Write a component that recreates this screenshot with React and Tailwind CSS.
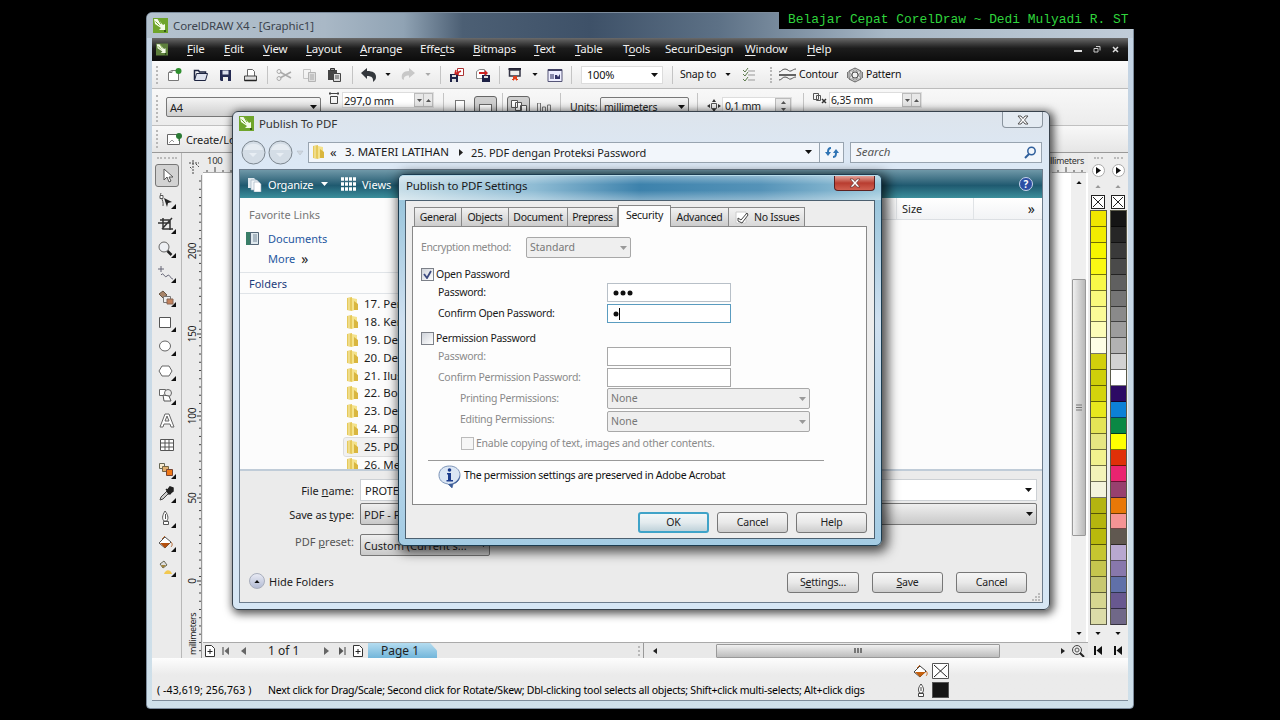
import clsx from 'clsx';

const menus = [
  ['w-[37px]', '', 'F', 'ile'],
  ['w-[39px]', '', 'E', 'dit'],
  ['w-[43px]', '', 'V', 'iew'],
  ['w-[54px]', '', 'L', 'ayout'],
  ['w-[60px]', '', 'A', 'rrange'],
  ['w-[53px]', 'Effe', 'c', 'ts'],
  ['w-[61px]', '', 'B', 'itmaps'],
  ['w-[41px]', '', 'T', 'ext'],
  ['w-[48px]', '', 'T', 'able'],
  ['w-[42px]', 'T', 'o', 'ols'],
  ['w-[80px]', 'SecuriDesign', '', ''],
  ['w-[62px]', '', 'W', 'indow'],
  ['w-[40px]', '', 'H', 'elp'],
];

const yellows = [
  '#f0e600', '#f2ec00', '#f6f600', '#faf814', '#f8f848', '#f9f97c', '#fbfb98', '#fdfdb8', '#fefee6',
  '#d2cf0c', '#cfcf0a', '#d4d40c', '#e8e81e', '#e4e456', '#e6e682', '#f1f18e', '#f3f3b8', '#f4f4dc',
  '#b4b410', '#b5b50e', '#b9b90c', '#c6c630', '#c6c64e', '#c8c870', '#d6d690', '#dcdca8',
];

const mixed = [
  '#151515', '#262626', '#3a3a3a', '#4a4a4a', '#606060', '#757575', '#8a8a8a', '#9d9d9d', '#b2b2b2',
  '#d2d2d2', '#ffffff', '#2c0a64', '#0c80d6', '#0a8844', '#ffff00', '#e03008', '#ea2470', '#98406e',
  '#e87808', '#f49494', '#605850', '#b8a8d0', '#8878ac', '#6070a8', '#685890', '#706888',
];

const folders = ['17. Pen', '18. Ker', '19. Des', '20. Des', '21. Ilus', '22. Boo', '23. Des', '24. PDF', '25. PDF', '26. Men'];

const tabs = [
  ['General', 'w-[48px]'],
  ['Objects', 'w-[48px]'],
  ['Document', 'w-[60px]'],
  ['Prepress', 'w-[51px]'],
  ['Security', 'w-[53px]'],
  ['Advanced', 'w-[59px]'],
];

function Svg({ w = 16, h = 16, className, children }) {
  return (
    <svg width={w} height={h} viewBox={`0 0 ${w} ${h}`} fill="none" className={clsx('shrink-0', className)}>
      {children}
    </svg>
  );
}

function Caret({ color = '#111', up, className }) {
  return (
    <Svg w={7} h={4} className={className}>
      <path d={up ? 'M0 4h7L3.5 0z' : 'M0 0h7L3.5 4z'} fill={color} />
    </Svg>
  );
}

function Sep() {
  return <div className="h-[18px] w-px shrink-0 bg-[#c4c4c4]"></div>;
}

function Dots({ className }) {
  return <div className={clsx('w-0 shrink-0 border-l-2 border-dotted border-[#b8b8b8]', className)}></div>;
}

function CorelLogo({ small }) {
  return (
    <svg width={small ? 12 : 15} height={small ? 13 : 15} viewBox="0 0 15 15" fill="none" className="shrink-0">
      <rect width="15" height="15" fill={small ? '#5d7f3c' : '#6fa52c'} />
      <path d="M1 1h4l5 6 2-1v6H6l2-2L2 6z" fill="#f4fbe8" />
      <path d="M5 1l3 5M2.500 3.500l4 4" stroke="#6fa52c" strokeWidth="1" />
      <circle cx="12" cy="13" r="1" fill="#204010" />
    </svg>
  );
}

function Slot({ w, className, children }) {
  return <div className={clsx('flex shrink-0 items-center', w, className)}>{children}</div>;
}

/* ---------- main window ---------- */

function MenuBar() {
  return (
    <div className="flex h-[23px] shrink-0 items-center bg-gradient-to-b from-[#6a6a6a] via-[#1c1c1c] via-45% to-[#0c0c0c] pb-[1px] text-[11.500px] tracking-[-0.200px] text-[#f0f0f0]">
      <Slot w="w-[35px]" className="pl-[4px]"><CorelLogo small /></Slot>
      {menus.map(([w, pre, key, post]) => (
        <span key={pre + key + post} className={clsx('shrink-0', w)}>
          {pre}<span className="underline underline-offset-2">{key}</span>{post}
        </span>
      ))}
      <div className="ml-auto flex items-center gap-[11px] pr-[9px]">
        <Svg w={8} h={8}><path d="M0 6h8" stroke="#ddd" strokeWidth="2" /></Svg>
        <Svg w={8} h={8}><path d="M1 3.500h4v3.500H1zM3 1.500h4v4" stroke="#ccc" /></Svg>
        <Svg w={7} h={7}><path d="M1 1l5 5M6 1L1 6" stroke="#ddd" strokeWidth="1.500" /></Svg>
      </div>
    </div>
  );
}

function StandardBar() {
  return (
    <div className="flex h-[28px] shrink-0 items-center border-b border-[#bcbcbc] bg-gradient-to-b from-[#fbfbfb] to-[#e9e9e9] text-[10.500px] tracking-[-0.200px] text-[#111]">
      <Slot w="w-[15px]" className="pl-[4px]"><Dots className="h-[18px]" /></Slot>
      <Slot w="w-[26px]">
        <Svg><path d="M1.500 5.500l3-2h7v10h-10z" fill="#fff" stroke="#777" /><path d="M2 5.500h3v-2" stroke="#777" /><circle cx="11.500" cy="4" r="3" fill="#2f8f2f" /></Svg>
      </Slot>
      <Slot w="w-[26px]">
        <Svg><path d="M1.500 13V3.500h4l1 1.500h6v2" stroke="#1d2440" strokeWidth="1.500" /><path d="M1.500 13.500l2-7h11l-2 7z" fill="#dfe3ee" stroke="#1d2440" /></Svg>
      </Slot>
      <Slot w="w-[24px]">
        <Svg w={14}><path d="M1 3h11v11H2l-1-1z" fill="#242a52" /><path d="M3.500 3.500h6v4h-6z" fill="#dce0ee" /><path d="M4 10h5v4H4z" fill="#eee" /></Svg>
      </Slot>
      <Slot w="w-[24px]">
        <Svg><path d="M4.500 9V2.500h5l2 2V9" fill="#fff" stroke="#666" /><path d="M1.500 9h12v4.500h-12z" fill="#ddd" stroke="#444" /><path d="M1.500 13.500h12" stroke="#222" strokeWidth="1.500" /></Svg>
      </Slot>
      <Slot w="w-[9px]"><Sep /></Slot>
      <Slot w="w-[26px]">
        <Svg><path d="M4 5l11 6M4 11l11-6" stroke="#aaa" strokeWidth="1.500" /><circle cx="3" cy="4.500" r="2" stroke="#aaa" /><circle cx="3" cy="11.500" r="2" stroke="#aaa" /></Svg>
      </Slot>
      <Slot w="w-[25px]">
        <Svg><path d="M1.500 2.500h7v9h-7z" stroke="#c4c4c4" /><path d="M6.500 5.500h7v9h-7z" fill="#ddd" stroke="#b4b4b4" /><path d="M8 8h4M8 10h4M8 12h4" stroke="#aaa" /></Svg>
      </Slot>
      <Slot w="w-[25px]">
        <Svg><path d="M1 3h9v10H1z" fill="#444" /><path d="M3.500 1.500h4v2h-4z" fill="#999" stroke="#333" /><path d="M6.500 6.500h7v8h-7z" fill="#ddd" stroke="#444" /><path d="M8 9h4M8 11h4" stroke="#555" /></Svg>
      </Slot>
      <Slot w="w-[9px]"><Sep /></Slot>
      <Slot w="w-[24px]">
        <Svg><path d="M0 6l6-5v3c6 0 9 2 9 6 0 2-1 3.500-3 5 .5-4-1-6-6-6v3z" fill="#33373c" /></Svg>
      </Slot>
      <Slot w="w-[15px]"><Caret className="h-[3px] w-[6px]" /></Slot>
      <Slot w="w-[25px]">
        <Svg><path d="M15 6L9 1v3C3 4 1 7 2 12l2 1c-.5-3 1-4.500 5-4.500V11z" fill="#c8c8c8" /></Svg>
      </Slot>
      <Slot w="w-[15px]"><Caret color="#aaa" className="h-[3px] w-[6px]" /></Slot>
      <Slot w="w-[9px]"><Sep /></Slot>
      <Slot w="w-[26px]">
        <Svg><path d="M8.500 1.500h6v7h-6z" fill="#fff" stroke="#a33" /><path d="M1 7h8v8H1z" fill="#1d2145" /><path d="M3 8h4v2H3zM3 12h4v3H3z" fill="#ddd" /><path d="M12 4L6 7M6 7l1-4M6 7h4" stroke="#c22" strokeWidth="1.500" /></Svg>
      </Slot>
      <Slot w="w-[24px]">
        <Svg><path d="M1.500 4.500l3-2h5v9h-8z" fill="#fff" stroke="#888" /><path d="M7 8h8v7H7z" fill="#1d2145" /><path d="M9 9h4v2H9z" fill="#ddd" /><path d="M4 5h6v-2l3 3-3 3v-2H4z" fill="#c22" /></Svg>
      </Slot>
      <Slot w="w-[9px]"><Sep /></Slot>
      <Slot w="w-[24px]">
        <Svg w={14}><path d="M.5 1h12.500v2H.5z" fill="#223" /><path d="M1.500 3h10.500v6h-10.500z" fill="#eee" stroke="#334" strokeWidth="1.500" /><path d="M5 9h4v5l-2-2-2 2z" fill="#e0401c" /><path d="M4 13l3-3 3 3" stroke="#e0401c" /></Svg>
      </Slot>
      <Slot w="w-[15px]"><Caret className="h-[3px] w-[6px]" /></Slot>
      <Slot w="w-[24px]">
        <Svg><path d="M1 2.500h14v12H1z" fill="#eef" stroke="#557" /><path d="M1 2h14v2H1z" fill="#446" /><path d="M3 7h4v5H3z" fill="#88a" /><path d="M8 12V8h2l1 2 2-3v5z" fill="#336" /></Svg>
      </Slot>
      <Slot w="w-[10px]"><Sep /></Slot>
      <Slot w="w-[91px]">
        <div className="flex h-[18px] w-[82px] items-center justify-between border border-[#dcdcdc] bg-white pr-1 pl-[5px] text-[11px]">
          100%<Caret />
        </div>
      </Slot>
      <Slot w="w-[8px]"><Sep /></Slot>
      <Slot w="w-[45px]"><span>Snap to</span></Slot>
      <Slot w="w-[17px]"><Caret className="h-[3px] w-[6px]" /></Slot>
      <Slot w="w-[28px]">
        <Svg w={14}><path d="M1 3l2 2 3-4M1 7l2 2 3-4M1 12l2 2 3-4" stroke="#5c7a4c" /><path d="M6 4h7M6 8h7M6 13h7" stroke="#999" /></Svg>
      </Slot>
      <Slot w="w-[9px]"><Dots className="h-[16px]" /></Slot>
      <Slot w="w-[20px]">
        <Svg w={17}><path d="M0 8h17" stroke="#333" strokeWidth="1.500" /><path d="M0 5c2 0 3-3 6-3s4 3 6 2 3-2 5-2M0 13c3 0 3-3 6-3s4 3 6 2 3-2 5-2" stroke="#555" /></Svg>
      </Slot>
      <Slot w="w-[48px]"><span>Contour</span></Slot>
      <Slot w="w-[19px]">
        <Svg><path d="M8 1l6 3v8l-6 3-6-3V4z" stroke="#666" /><path d="M8 1l6 11H2zM8 15L2 4h12z" stroke="#777" strokeWidth=".7" /><circle cx="8" cy="8" r="3" stroke="#555" /><path d="M.5 5v6M15.500 5v6" stroke="#777" /></Svg>
      </Slot>
      <span>Pattern</span>
    </div>
  );
}

function SpinPair() {
  return (
    <div className="flex h-[14px] w-[19px] border border-[#bbb] bg-[#e8e8e8]">
      <div className="flex flex-1 items-center justify-center border-r border-[#bbb]"><Caret color="#555" className="h-[3px] w-[5px]" /></div>
      <div className="flex flex-1 items-center justify-center"><Caret up color="#555" className="h-[3px] w-[5px]" /></div>
    </div>
  );
}

function PropertyBar() {
  return (
    <div className="flex h-[37px] shrink-0 items-start border-b border-[#c0c0c0] bg-gradient-to-b from-[#f8f8f8] to-[#ececec] text-[10.500px] tracking-[-0.200px] text-[#222]">
      <Slot w="w-[14px]" className="pt-[6px] pl-[4px]"><Dots className="h-[27px]" /></Slot>
      <div className="mt-[8px] flex h-[20px] w-[155px] shrink-0 items-center justify-between rounded-[2px] border border-[#777] bg-gradient-to-b from-[#f4f4f4] to-[#cfcfcf] px-[3px] text-[11px]">
        A4<Caret />
      </div>
      <Slot w="w-[21px]" className="pt-[3px] pl-[8px]">
        <Svg w={10} h={13}><path d="M1.500 4.500h7v7h-7z" stroke="#444" /><path d="M0 1.500h10M1 0v3M9 0v3" stroke="#444" /></Svg>
      </Slot>
      <div className="mt-[3px] flex h-[16px] w-[92px] shrink-0 items-center justify-between border border-[#ddd] bg-white pl-[1px] text-[11px]">
        297,0 mm<SpinPair />
      </div>
      <Slot w="w-[21px]" className="pt-[4px] pl-[9px]"><Sep /></Slot>
      <div className="mt-[11px] h-[14px] w-[10px] shrink-0 border border-[#777] bg-white"></div>
      <div className="mt-[7px] ml-[9px] flex h-[22px] w-[23px] shrink-0 justify-center rounded-[3px] border border-[#666] bg-[#cfcfcf] pt-[7px]">
        <div className="h-[10px] w-[13px] border border-[#666] bg-white"></div>
      </div>
      <Slot w="w-[10px]" className="pt-[4px] pl-[5px]"><Sep /></Slot>
      <div className="mt-[7px] flex h-[22px] w-[23px] shrink-0 justify-center rounded-[3px] border border-[#666] bg-[#cfcfcf] pt-[2px]">
        <Svg w={18} h={14}><path d="M1.500 1.500h6v7h-6zM5.500 3.500h6v8h-6zM10.500 6.500h6v7h-6z" fill="#fff" stroke="#555" /></Svg>
      </div>
      <Slot w="w-[30px]" className="pt-[14px] pl-[7px]">
        <Svg w={15} h={10}><path d="M.5 0h3v9h-3zM5.500 4h3v5h-3zM10.500 2h3v7h-3z" stroke="#777" /></Svg>
      </Slot>
      <Slot w="w-[10px]" className="pt-[4px]"><Sep /></Slot>
      <span className="mt-[13px] w-[30px] shrink-0">Units:</span>
      <div className="mt-[8px] flex h-[20px] w-[89px] shrink-0 items-center justify-between rounded-[2px] border border-[#777] bg-gradient-to-b from-[#f4f4f4] to-[#d4d4d4] px-[3px]">
        millimeters<Caret />
      </div>
      <Slot w="w-[18px]" className="pt-[4px] pl-[8px]"><Sep /></Slot>
      <Slot w="w-[15px]" className="pt-[10px]">
        <Svg w={14} h={13}><path d="M4.500 4.500h5v5h-5z" stroke="#555" /><path d="M0 7l3-2v4zM14 7l-3-2v4zM7 0L5 3h4zM7 13l2-3H5z" fill="#333" /></Svg>
      </Slot>
      <div className="mt-[8px] flex h-[18px] w-[70px] shrink-0 items-center justify-between border border-[#ddd] bg-white pl-[2px]">
        0,1 mm
        <div className="flex h-[17px] w-[16px] flex-col items-center justify-around border border-[#bbb] bg-[#e8e8e8]">
          <Caret up color="#555" className="h-[3px] w-[5px]" />
          <Caret color="#555" className="h-[3px] w-[5px]" />
        </div>
      </div>
      <Slot w="w-[21px]" className="pt-[4px] pl-[11px]"><Sep /></Slot>
      <Slot w="w-[16px]" className="pt-[3px]">
        <Svg w={14} h={13}><path d="M.5 1.500h5v6h-5zM3.500 3.500h4v5h-4z" stroke="#555" /><path d="M9 7l4 4M13 7l-4 4" stroke="#333" strokeWidth="1.500" /></Svg>
      </Slot>
      <div className="mt-[3px] flex h-[16px] w-[93px] shrink-0 items-center justify-between border border-[#ddd] bg-white pl-[1px]">
        6,35 mm<SpinPair />
      </div>
    </div>
  );
}

const tools = [
  <path d="M6 2v11l3-3 2 5 2-1-2-4h4z" fill="#fff" stroke="#555" key="pick" />,
  <g key="shape"><path d="M3 1c-2 4 3 6 2 13" stroke="#555" /><path d="M2 3.500h3v3H2z" fill="#fff" stroke="#555" /><path d="M6 6l8 4-4 1-1 4z" fill="#222" /></g>,
  <path d="M0 6h12M5 1v11h10M2 3h10v10M14 1L4 12" stroke="#333" strokeWidth="1.500" key="crop" />,
  <g key="zoom"><circle cx="6" cy="6" r="5" fill="#eef0f4" stroke="#666" /><path d="M9.500 10l4 4" stroke="#222" strokeWidth="2.500" /></g>,
  <path d="M3 0v6M0 3h6M3 9c3-4 3 4 6 1s3 3 6 3" stroke="#667" key="free" />,
  <g key="smart"><path d="M1 4l4-3 4 4-4 3z" fill="#a88468" stroke="#654" /><path d="M5.500 6.500h7v6h-7z" fill="#eee" stroke="#777" /><path d="M9 9h6v5H9z" fill="#c4825c" stroke="#865" /></g>,
  <path d="M1.500 2.500h11v10h-11z" fill="#fff" stroke="#555" key="rect" />,
  <ellipse cx="7" cy="7" rx="5.500" ry="5" fill="#fff" stroke="#666" key="ell" />,
  <path d="M4 2h7l3 5-3 5H4L1 7z" fill="#fff" stroke="#666" key="poly" />,
  <g key="basic"><path d="M1.500 1.500h6v6h-6z" fill="#fff" stroke="#666" /><circle cx="10" cy="5" r="3.500" fill="#eee" stroke="#666" /><path d="M5 7l6 1 2 5H6z" fill="#fff" stroke="#555" /></g>,
  <path d="M2 14L7 1h4l5 13h-3l-1-3H6l-1 3zM7 8h4L9 3z" fill="#fff" stroke="#666" key="text" />,
  <path d="M2.500 2.500h13v11h-13zM2.500 6h13M2.500 10h13M7 2.500v11M11 2.500v11" fill="#fff" stroke="#555" key="table" />,
  <g key="blend"><path d="M1.500 1.500h5v5h-5z" fill="#f6ead0" stroke="#665" /><path d="M4.500 4.500h6v5h-6z" fill="#e0b070" stroke="#764" /><path d="M8.500 7.500h6v6h-6z" fill="#f07818" stroke="#743" /></g>,
  <g key="drop"><path d="M2 14l1-3 6-6 2 2-6 6z" fill="#ccc" stroke="#444" /><path d="M8 3l5 5M9 5l3-4 3 1v3l-4 3z" fill="#222" stroke="#222" strokeWidth="1.500" /></g>,
  <path d="M7 0c4 5 3 8 2 10H6C4 8 4 5 7 0zM5.500 10.500h5v3h-5zM7.500 3v5" fill="#fff" stroke="#555" key="pen" />,
  <g key="fill"><path d="M1 8l6-6 6 5-6 6z" fill="#fff" stroke="#555" /><path d="M2 8h10l-5 5z" fill="#b4500e" /><path d="M4 4L7 1M13 7c2 2 1 4 0 5" stroke="#b4642a" /></g>,
  <g key="ifill"><path d="M2 4l4-3 3 4-4 3z" fill="#ddd" stroke="#665" /><path d="M3 5h5l-3 3z" fill="#a0843c" /><path d="M6 14c2-6 7-4 8 0z" fill="#f2c850" /></g>,
];

function Toolbox() {
  return (
    <div className="flex w-[30px] shrink-0 flex-col items-center border-r border-[#b8b8b8] bg-[#ebebeb] pt-[4px]">
      <div className="mb-[5px] w-[20px] border-t-2 border-dotted border-[#bbb]"></div>
      {tools.map((t, i) => (
        <div
          key={i}
          className={clsx('flex w-[24px] items-center justify-center', i === 0 ? 'mb-[1.500px] h-[23px] rounded-[3px] border border-[#777] bg-[#d2d2d2]' : 'h-[24.500px]')}
        >
          <Svg w={18} h={17}>
            {t}
            {i > 0 && ![10, 11].includes(i) && <path d="M18 12v5h-5z" fill="#111" />}
          </Svg>
        </div>
      ))}
    </div>
  );
}

function VerticalRuler() {
  const ticks = Array.from({ length: 58 }, (_, i) => 6 + i * 8.24);
  return (
    <div className="flex w-[21px] shrink-0 flex-col bg-[#ebebeb] pt-[6px]">
      <Svg w={20} h={16} className="ml-[1px]"><path d="M6 4h10M10 1v14M7 8l2 2M13 5l3 3" stroke="#444" strokeDasharray="2 1" /></Svg>
      <Svg w={20} h={483}>
        <path d="M19.500 0v483" stroke="#999" />
        {ticks.map((y) => <path key={y} d={`M17 ${y}h2`} stroke="#444" />)}
        {[76, 159, 241, 323, 406].map((y) => <path key={y} d={`M15 ${y}h4`} stroke="#333" />)}
        {[['200', 76], ['150', 159], ['100', 241], ['50', 323], ['0', 406]].map(([t, y]) => (
          <text key={t} transform={`translate(14 ${y}) rotate(-90)`} textAnchor="middle" fontSize="10" letterSpacing="-0.3" fill="#222">{t}</text>
        ))}
        <text transform="translate(14 459) rotate(-90)" textAnchor="middle" fontSize="9" letterSpacing="-0.5" fill="#222">millimeters</text>
      </Svg>
    </div>
  );
}

function HorizontalRuler() {
  return (
    <div className="flex h-[20px] shrink-0 items-stretch justify-between bg-[#ebebeb] text-[10px] text-[#333]">
      <div className="flex flex-col">
        <span className="ml-[4px] h-[14px] text-[9.500px] leading-[16px] tracking-[-0.300px]">100</span>
        <Svg w={30} h={6}><path d="M4 3v2M12 0v5M20 3v2M28 3v2" stroke="#444" /><path d="M0 5.500h30" stroke="#aaa" /></Svg>
      </div>
      <div className="flex flex-col items-end">
        <span className="h-[14px] pr-[4px] text-[9px] leading-[16px] tracking-[-0.300px]">millimeters</span>
        <Svg w={36} h={6}><path d="M6 3v2M14 0v5M22 3v2M30 3v2" stroke="#444" /><path d="M0 5.500h34" stroke="#aaa" /></Svg>
      </div>
    </div>
  );
}

function Palette({ colors, className }) {
  return (
    <div className={clsx('flex shrink-0 flex-col items-center bg-[#ededed]', className)}>
      <div className="mt-[4px] w-[9px] border-t-2 border-dotted border-[#bbb]"></div>
      <div className="mt-[5px] flex size-[13px] items-center justify-center rounded-full border border-[#aaa] bg-white">
        <Svg w={6} h={7}><path d="M1 0v7l5-3.500z" fill="#111" /></Svg>
      </div>
      <Caret up color="#999" className="mt-[8px] h-[3px] w-[6px]" />
      <div className="mt-[7px] flex size-[14px] items-center justify-center border border-[#222] bg-white">
        <Svg w={12} h={12}><path d="M1 1l10 10M11 1L1 11" stroke="#222" /></Svg>
      </div>
      <div className="mt-[1px] flex h-[415px] w-[17px] flex-col border-x border-t border-[#5a5a4a]">
        {colors.map((c, i) => (
          <div key={i} className="flex-1 border-b border-[#00000088]" style={{ backgroundColor: c }}></div>
        ))}
      </div>
      <Caret className="mt-[7px] h-[3px] w-[6px]" />
      <Svg w={8} h={9} className="mt-[11px]"><path d="M1 0v9" stroke="#111" strokeWidth="2" /><path d="M8 0v9L2.500 4.500z" fill="#111" /></Svg>
    </div>
  );
}

function AddPage() {
  return <Svg w={10} h={12}><path d="M.5.500h6l3 3v8h-9z" fill="#fff" stroke="#333" /><path d="M5 4v5M2.500 6.500h5" stroke="#222" /></Svg>;
}

function PageBar() {
  return (
    <div className="flex h-[16px] shrink-0 items-center border-t border-[#aaa] bg-[#e9e9e9] text-[12px] text-[#222]">
      <Slot w="w-[19px]" className="pl-[2px]"><AddPage /></Slot>
      <Slot w="w-[18px]"><Svg w={8} h={8}><path d="M1 0v8" stroke="#777" strokeWidth="1.500" /><path d="M7 0v8L2.500 4z" fill="#666" /></Svg></Slot>
      <Slot w="w-[28px]"><Svg w={6} h={8}><path d="M6 0v8L1 4z" fill="#666" /></Svg></Slot>
      <Slot w="w-[56px]"><span className="text-[12px]">1 of 1</span></Slot>
      <Slot w="w-[14px]"><Svg w={6} h={8}><path d="M0 0v8l5-4z" fill="#666" /></Svg></Slot>
      <Slot w="w-[15px]"><Svg w={8} h={8}><path d="M1 0v8l4.500-4z" fill="#555" /><path d="M7 0v8" stroke="#777" strokeWidth="1.500" /></Svg></Slot>
      <Slot w="w-[15px]"><AddPage /></Slot>
      <div className="flex h-full w-[69px] shrink-0 items-center bg-gradient-to-b from-[#b4dcf0] to-[#72b6da] pl-[13px] text-[12px] [clip-path:polygon(0_0,90%_0,100%_50%,100%_100%,0_100%)]">
        Page 1
      </div>
      <Dots className="ml-auto h-[10px]" />
      <div className="mx-[3px] h-full w-px bg-[#999]"></div>
      <Slot w="w-[69px]" className="pl-[6px]"><Svg w={4} h={6}><path d="M4 0v6L0 3z" fill="#222" /></Svg></Slot>
      <div className="flex h-[14px] w-[284px] shrink-0 items-center justify-center gap-px rounded-[1px] border border-[#999] bg-gradient-to-b from-[#f0f0f0] to-[#bdbdbd]">
        <div className="h-[5px] w-[2px] bg-[#777]"></div>
        <div className="h-[5px] w-[2px] bg-[#777]"></div>
        <div className="h-[5px] w-[2px] bg-[#777]"></div>
      </div>
      <Slot w="w-[71px]" className="justify-end pr-[6px]"><Svg w={4} h={6}><path d="M0 0v6l4-3z" fill="#222" /></Svg></Slot>
      <Slot w="w-[17px]"><Svg w={14} h={13}><circle cx="6" cy="6" r="4.500" stroke="#444" /><circle cx="6" cy="6" r="2" stroke="#555" /><path d="M9 9l4 4" stroke="#222" strokeWidth="2" /></Svg></Slot>
    </div>
  );
}

function StatusBar() {
  return (
    <div className="flex h-[42px] shrink-0 justify-between bg-gradient-to-b from-[#fdfdfd] to-[#ebebeb] to-40% text-[10.500px] text-black">
      <div className="flex items-end pb-[5px]">
        <span className="w-[116px] pl-[5px] tracking-[0.100px]">( -43,619; 256,763 )</span>
        <span className="tracking-[-0.235px]">Next click for Drag/Scale; Second click for Rotate/Skew; Dbl-clicking tool selects all objects; Shift+click multi-selects; Alt+click digs</span>
      </div>
      <div className="mr-[179px] flex flex-col gap-[3px] pt-[5px]">
        <div className="flex items-center gap-[4px]">
          <Svg w={15} h={15}><path d="M1 8l6-6 6 5-6 6z" fill="#fff" stroke="#444" /><path d="M2 8h11l-6 5z" fill="#c4600e" /><path d="M4 4L7 1M13 7c2 2 1 4 0 5" stroke="#c4641a" /></Svg>
          <Svg w={17} h={16}><path d="M.5.500h16v15H.5z" fill="#fff" stroke="#555" /><path d="M2 2l13 12M15 2L2 14" stroke="#222" /></Svg>
        </div>
        <div className="flex items-center gap-[4px]">
          <Svg w={15} h={15}><path d="M8 1c3 4 3 6 1.500 9h-3C5 7 5 5 8 1zM5.500 10.500h5v3h-5zM8 4v4" fill="#fff" stroke="#444" /></Svg>
          <div className="h-[16px] w-[17px] border border-[#555] bg-[#151515]"></div>
        </div>
      </div>
    </div>
  );
}

function MainWindow() {
  return (
    <div className="absolute top-[12px] left-[146px] flex h-[697px] w-[988px] flex-col rounded-t-[6px] rounded-b-[4px] border border-[#7d8c9c] bg-gradient-to-b from-[#c3d3e3] to-[#cfe0ea] px-[5px] pb-[7px]">
      <div className="-mx-[5px] flex h-[25px] shrink-0 items-center rounded-t-[5px] bg-[linear-gradient(to_right,#b4c2ce,#a9b8c6_18%,#90a3b4_26%,#4c5f74_32%,#3e5168_45%,#5d7186_58%,#a8b8c6_75%,#c0ccd8)] pl-[6px] text-[11.500px] tracking-[-0.100px] text-[#3c444e]">
        <CorelLogo />
        <span className="ml-[5px]">CorelDRAW X4 - [Graphic1]</span>
      </div>
      <div className="flex min-h-0 flex-1 flex-col border-b border-[#7e8c9a] bg-[#ebebeb]">
        <MenuBar />
        <StandardBar />
        <PropertyBar />
        <div className="flex h-[27px] shrink-0 items-center border-b border-[#999] bg-gradient-to-b from-[#f8f8f8] to-[#e6e6e6] text-[11px] tracking-[-0.100px] text-[#222]">
          <Slot w="w-[15px]" className="pl-[4px]"><Dots className="h-[18px]" /></Slot>
          <Slot w="w-[19px]"><Svg><path d="M.5 3.500h12v10H.5z" fill="#fff" stroke="#666" /><path d="M2 12l3-3 2 2" stroke="#999" /><circle cx="12" cy="5" r="3" fill="#2a7a34" /><path d="M12 5v5" stroke="#2a7a34" /></Svg></Slot>
          <span>Create/Load</span>
        </div>
        <div className="flex min-h-0 flex-1">
          <Toolbox />
          <VerticalRuler />
          <div className="flex flex-1 flex-col">
            <HorizontalRuler />
            <div className="flex flex-1 bg-white">
              <div className="flex-1"></div>
              <div className="mr-[2px] flex w-[15px] flex-col items-center bg-[#efefef] pt-[8px]">
                <Caret up className="h-[3px] w-[6px]" />
                <div className="mt-[95px] flex h-[257px] w-[14px] items-center justify-center rounded-[1px] border border-[#999] bg-gradient-to-r from-[#f0f0f0] to-[#b8b8b8]">
                  <Svg w={6} h={8}><path d="M0 1h6M0 3.500h6M0 6h6" stroke="#777" /></Svg>
                </div>
                <Caret className="mt-auto mb-[7px] h-[3px] w-[6px]" />
              </div>
            </div>
            <PageBar />
          </div>
          <Palette colors={yellows} className="w-[20px]" />
          <Palette colors={mixed} className="w-[20px]" />
        </div>
        <StatusBar />
      </div>
    </div>
  );
}

/* ---------- publish to pdf ---------- */

function Folder({ className }) {
  return (
    <Svg w={13} h={16} className={className}>
      <path d="M1 2l5-1v14l-5-1z" fill="#e6c95a" />
      <path d="M6 2l5 1v10l-5 2z" fill="#f4e28c" />
      <path d="M8 5l4 3v6H8z" fill="#d9b63f" />
      <path d="M3 2v12" stroke="#f8efb8" />
    </Svg>
  );
}

function Button({ w, primary, children }) {
  return (
    <div
      className={clsx(
        'flex h-[21px] shrink-0 items-center justify-center rounded-[3px] border text-[10.500px] tracking-[-0.200px] text-[#222]',
        w,
        primary
          ? 'border-2 border-[#3fa3c8] bg-gradient-to-b from-[#f2f7f9] via-[#e3ebee] via-50% to-[#bfd2da]'
          : 'border-[#777] bg-gradient-to-b from-[#f6f6f6] via-[#e9e9e9] via-50% to-[#cdcdcd]'
      )}
    >
      <span>{children}</span>
    </div>
  );
}

function PublishDialog() {
  return (
    <div className="absolute top-[111px] left-[232px] flex h-[499px] w-[818px] flex-col rounded-[6px] border border-[#38424c] bg-gradient-to-b from-[#dde4ec] via-[#dce8f5] via-10% to-[#d6e6f4] px-[6px] pb-[6px] text-[11px] text-[#1c1c1c] shadow-[2px_2px_8px_2px_rgba(0,0,0,0.65)]">
      <div className="flex h-[26px] shrink-0 items-start justify-between">
        <div className="flex items-center gap-[5px] pt-[4px] text-[11.500px] tracking-[-0.100px] text-[#333]">
          <CorelLogo />Publish To PDF
        </div>
        <div className="flex h-[16px] w-[41px] items-center justify-center rounded-b-[4px] border border-t-0 border-[#8a949e] bg-[#e4ebf2]">
          <Svg w={12} h={10}><path d="M1 1h3l2 2.500L8 1h3L7.500 5 11 9H8L6 6.500 4 9H1l3.500-4z" fill="#fff" stroke="#555" /></Svg>
        </div>
      </div>
      <div className="flex h-[28px] shrink-0 items-center pr-[1px]">
        <Svg w={68} h={28} className="mr-[1px]">
          <circle cx="14.500" cy="14.500" r="11.500" fill="#d4dde6" stroke="#7c868f" />
          <circle cx="41.500" cy="14.500" r="11.500" fill="#d4dde6" stroke="#7c868f" />
          <path d="M5 12a10 9 0 0119 0zM32 12a10 9 0 0119 0z" fill="#e6ecf2" />
          <path d="M10 15h8l-4 4zM37 15h8l-4 4z" fill="#e8eef4" />
          <path d="M58 13h6l-3 4z" fill="#d0d8e0" stroke="#b0bac4" strokeWidth=".5" />
        </Svg>
        <div className="flex h-[21px] w-[512px] items-center border border-[#98a4b0] bg-[#f2f6fb] pl-[3px]">
          <Folder />
          <span className="ml-[5px] w-[15px] text-[13px]">«</span>
          <span className="w-[114px] text-[11.500px]">3. MATERI LATIHAN</span>
          <Svg w={4} h={7} className="mr-[8px]"><path d="M0 0v7l4-3.500z" fill="#222" /></Svg>
          <span className="text-[11px] tracking-[-0.100px]">25. PDF dengan Proteksi Password</span>
          <Caret className="mr-[7px] ml-auto" />
        </div>
        <div className="-ml-px flex h-[21px] w-[25px] items-center justify-center border border-[#98a4b0] bg-[#f2f6fb]">
          <Svg w={14} h={13}><path d="M6 2C3 2 3 4 3 6M8 11c3 0 3-2 3-5" stroke="#2f74b4" strokeWidth="2" /><path d="M0 6h6L3 10zM8 7h6l-3-4z" fill="#2f74b4" /></Svg>
        </div>
        <div className="ml-[6px] flex h-[21px] flex-1 items-center justify-between border border-[#98a4b0] bg-[#f2f6fb] pr-[4px] pl-[5px] text-[11.500px] text-[#555] italic">
          Search
          <Svg w={13} h={13}><circle cx="7.500" cy="5" r="3.700" stroke="#2f5f9c" strokeWidth="1.500" /><path d="M5 8l-4 4" stroke="#2f5f9c" strokeWidth="2" /></Svg>
        </div>
      </div>
      <div className="mt-[3px] flex min-h-0 flex-1 flex-col border border-[#6c7c8c] bg-[#fcfcfc]">
        <div className="flex h-[28px] shrink-0 items-center bg-gradient-to-b from-[#6f98a8] via-[#1f5a70] via-55% to-[#3c8f9c] text-[11px] text-white">
          <Slot w="w-[28px]" className="pl-[7px]">
            <Svg w={15} h={15}><path d="M1 1h6l2 2v8H1z" fill="#dfe8ee" /><path d="M4 3h6l2 2v8H4z" fill="#f0f5f8" stroke="#9ab" strokeWidth=".6" /><path d="M7 5h5l2 2v8H7z" fill="#fff" stroke="#9ab" strokeWidth=".6" /></Svg>
          </Slot>
          <span className="w-[53px] tracking-[-0.200px]">Organize</span>
          <Slot w="w-[20px]"><Caret color="#fff" /></Slot>
          <Slot w="w-[21px]">
            <Svg w={15} h={14}><path d="M0 2h15M0 7h15M0 12h15" stroke="#fff" strokeWidth="3.500" strokeDasharray="3 1" /></Svg>
          </Slot>
          <span>Views</span>
          <div className="mr-[9px] ml-auto flex size-[14px] items-center justify-center rounded-full border border-[#c8d4ec] bg-[#2c4ea4] text-[10px] font-bold">?</div>
        </div>
        <div className="flex h-[273px] shrink-0 border-b-2 border-[#c0ccd8]">
          <div className="flex w-[162px] shrink-0 flex-col">
            <span className="mt-[9px] ml-[9px] h-[16px] leading-[16px] text-[#777]">Favorite Links</span>
            <div className="mt-[7px] ml-[6px] flex h-[16px] items-center gap-[8px] text-[11px] text-[#1f57a0]">
              <Svg w={14} h={15}><path d="M0 1h6v13H0z" fill="#3a7e68" /><path d="M4.500 1.500h8v12h-8z" fill="#dfe9ee" stroke="#567" /><path d="M7 4h4M7 6h4M7 8h4M7 10h4" stroke="#789" /></Svg>
              Documents
            </div>
            <div className="mt-[4px] ml-[28px] flex h-[17px] items-center gap-[6px] text-[#1f57a0]">
              More<span className="text-[14px] text-[#222]">»</span>
            </div>
            <div className="mt-[5px] flex h-[22px] items-center border-y border-[#e0e4e8] pl-[9px] text-[#1c3c7c]">Folders</div>
            <div className="flex flex-1 flex-col overflow-hidden pt-[1px] text-[11.500px]">
              {folders.map((f) => (
                <div
                  key={f}
                  className={clsx('ml-[104px] flex h-[17.850px] shrink-0 items-center gap-[5px] whitespace-nowrap', f === '25. PDF' && 'rounded-[2px] bg-[#f1f1f1] outline outline-[#ddd]')}
                >
                  <Folder className="ml-[2px]" />{f}
                </div>
              ))}
            </div>
          </div>
          <div className="flex h-[22px] flex-1 items-center border-b border-l border-[#dcdfe3] bg-gradient-to-b from-white to-[#f2f3f5]">
            <div className="ml-[493px] flex h-full w-[78px] items-center border-x border-[#e0e3e6] pl-[5px] text-[11px]">Size</div>
            <span className="mr-[7px] ml-auto text-[14px]">»</span>
          </div>
        </div>
        <div className="flex flex-1 flex-col bg-[#ebebeb]">
          <div className="mt-[8px] flex h-[22px] items-center">
            <span className="w-[114px] text-right">File <u>n</u>ame:</span>
            <div className="ml-[6px] flex h-[22px] w-[677px] items-center justify-between border border-[#ccd0d4] bg-white px-[4px] text-[11px]">
              PROTEKSI<Caret />
            </div>
          </div>
          <div className="mt-[2px] flex h-[22px] items-center">
            <span className="w-[114px] text-right tracking-[-0.150px]">Save as <u>t</u>ype:</span>
            <div className="ml-[6px] flex h-[22px] w-[677px] items-center justify-between rounded-[2px] border border-[#777] bg-gradient-to-b from-[#efefef] to-[#c9c9c9] px-[3px]">
              PDF - Portable Document Format<Caret />
            </div>
          </div>
          <div className="mt-[9px] flex h-[22px] items-center">
            <span className="-mt-[7px] w-[114px] text-right text-[#555]">PDF <u>p</u>reset:</span>
            <div className="ml-[6px] flex h-[22px] w-[130px] items-center justify-between rounded-[2px] border border-[#777] bg-gradient-to-b from-[#efefef] to-[#c9c9c9] px-[3px] text-[11px]">
              Custom (Current s...<Caret className="h-[3px] w-[5px]" />
            </div>
          </div>
          <div className="mt-[16px] flex h-[21px] items-center justify-between">
            <div className="flex items-center gap-[4px] pb-[3px] pl-[9px]">
              <div className="flex size-[16px] items-center justify-center rounded-full border border-[#a8aebc] bg-gradient-to-b from-[#e8eaf4] to-[#b4bcd4]"><Caret up className="h-[3px] w-[6px]" /></div>
              Hide Folders
            </div>
            <div className="mr-[15px] flex gap-[13px]">
              <Button w="w-[72px]">S<u>e</u>ttings...</Button>
              <Button w="w-[71px]"><u>S</u>ave</Button>
              <Button w="w-[71px]">Cancel</Button>
            </div>
          </div>
          <div className="mt-auto mr-[2px] mb-[1px] flex justify-end">
            <Svg w={9} h={8}><path d="M1 7h2M4 7h2M7 7h2M4 4h2M7 4h2M7 1h2" stroke="#bbb" strokeWidth="2" /></Svg>
          </div>
        </div>
      </div>
    </div>
  );
}

/* ---------- publish to pdf settings ---------- */

function Check({ on, disabled }) {
  return (
    <div className={clsx('flex size-[13px] shrink-0 items-center justify-center border', disabled ? 'border-[#bbb] bg-[#f6f6f6]' : 'border-[#7c8088] bg-gradient-to-br from-[#cfd3da] to-white')}>
      {on && <Svg w={9} h={9}><path d="M1 4l3 4 4-7" stroke="#3c4a80" strokeWidth="1.800" /></Svg>}
    </div>
  );
}

function Field({ label, indent, className, inputClass, children }) {
  return (
    <div className={clsx('flex items-center', className)}>
      <span className={clsx('shrink-0', indent ? 'w-[147px]' : 'w-[169px]')}>{label}</span>
      <div className={clsx('flex h-[19px] w-[124px] items-center border bg-white pl-[5px]', inputClass)}>{children}</div>
    </div>
  );
}

function Select({ w, children }) {
  return (
    <div className={clsx('flex h-[21px] shrink-0 items-center justify-between rounded-[2px] border border-[#a8a8a8] bg-[#efefef] px-[3px] tracking-normal text-[#777]', w)}>
      <span>{children}</span><Caret color="#999" />
    </div>
  );
}

function Bullets({ n }) {
  return (
    <div className="flex gap-[1px]">
      {Array.from({ length: n }, (_, i) => <Svg key={i} w={6} h={6}><circle cx="3" cy="3" r="2.500" fill="#111" /></Svg>)}
    </div>
  );
}

function SettingsDialog() {
  return (
    <div className="absolute top-[174px] left-[398px] flex h-[372px] w-[484px] flex-col rounded-[6px] border border-[#1c3c50] bg-gradient-to-b from-[#8fc0d8] via-[#cfe0f0] via-40% to-[#a4cce4] px-[6px] pb-[6px] text-[10.500px] tracking-[-0.280px] text-[#1a1a1a] shadow-[3px_3px_12px_3px_rgba(0,0,0,0.7)]">
      <div className="-mx-[6px] flex h-[25px] shrink-0 items-start justify-between rounded-t-[5px] border-t border-[#b8dcea] bg-[linear-gradient(to_bottom,rgba(255,255,255,0.35),rgba(255,255,255,0)_35%,rgba(255,255,255,0)_60%,rgba(255,255,255,0.35)),linear-gradient(to_right,#c8dee8,#8fbcd4_28%,#3d82ac_50%,#5593b8_75%,#9cc8dc)] pr-[6px] pl-[7px]">
        <span className="pt-[4px] text-[11.500px] tracking-[-0.150px]">Publish to PDF Settings</span>
        <div className="flex h-[15px] w-[41px] items-center justify-center rounded-b-[4px] border border-t-0 border-[#5c2020] bg-gradient-to-b from-[#e0a098] via-[#b83c30] via-50% to-[#d06050]">
          <Svg w={12} h={10}><path d="M1 1h3l2 2.500L8 1h3L7.500 5 11 9H8L6 6.500 4 9H1l3.500-4z" fill="#fff" stroke="#5a3030" strokeWidth=".7" /></Svg>
        </div>
      </div>
      <div className="flex flex-1 flex-col border border-[#4c6070] bg-[#ededed] pr-[7px] pl-[6px]">
        <div className="flex h-[25px] shrink-0 items-end pl-[2px]">
          {tabs.map(([label, w], i) => (
            <div
              key={label}
              className={clsx(
                'flex shrink-0 items-center justify-center border border-b-0 border-[#888]',
                w,
                label === 'Security' ? 'z-10 -mb-px h-[22px] bg-[#fdfdfd] pb-[2px]' : 'h-[19px] bg-gradient-to-b from-[#f2f2f2] to-[#cccccc]',
                i > 0 && label !== 'Security' && '-ml-px'
              )}
            >
              <span>{label}</span>
            </div>
          ))}
          <div className="-ml-px flex h-[19px] w-[77px] items-center gap-[4px] border border-b-0 border-[#888] bg-gradient-to-b from-[#f2f2f2] to-[#d8d8d8] pl-[5px]">
            <Svg w={16} h={15}><path d="M2 2h10v11H2z" fill="#fff" stroke="#ccc" /><path d="M4 8l3 2 6-7 1 2-6 8-4-2z" fill="#fff" stroke="#444" /></Svg>
            <span>No Issues</span>
          </div>
        </div>
        <div className="flex h-[279px] shrink-0 flex-col border border-[#888] bg-[#fdfdfd] pl-[8px]">
          <div className="mt-[10px] flex h-[21px] items-center text-[#8a8a8a]">
            <span className="w-[105px] shrink-0 tracking-[-0.400px]">Encryption method:</span>
            <Select w="w-[105px]">Standard</Select>
          </div>
          <div className="mt-[9px] flex h-[15px] items-center gap-[2px]"><Check on />Open Password</div>
          <Field label="Password:" className="mt-[1px] ml-[17px]" inputClass="border-[#b8c0c8]"><Bullets n={3} /></Field>
          <Field label="Confirm Open Password:" className="mt-[2px] ml-[17px]" inputClass="border-[#5a9cc0]">
            <Bullets n={1} /><div className="h-[12px] w-px bg-black"></div>
          </Field>
          <div className="mt-[8px] flex h-[15px] items-center gap-[2px]"><Check />Permission Password</div>
          <Field label="Password:" className="mt-[1px] ml-[17px] text-[#8a8a8a]" inputClass="border-[#a8a8a8]" />
          <Field label="Confirm Permission Password:" className="mt-[2px] ml-[17px] text-[#8a8a8a]" inputClass="border-[#a8a8a8]" />
          <div className="mt-[1px] ml-[39px] flex items-center text-[#8a8a8a]">
            <span className="w-[147px]">Printing Permissions:</span>
            <Select w="w-[203px]">None</Select>
          </div>
          <div className="mt-[2px] ml-[39px] flex items-center text-[#8a8a8a]">
            <span className="w-[147px] pb-[4px]">Editing Permissions:</span>
            <Select w="w-[203px]">None</Select>
          </div>
          <div className="mt-[4px] ml-[40px] flex h-[15px] items-center gap-[2px] text-[#8a8a8a]"><Check disabled /><span className="tracking-[-0.230px]">Enable copying of text, images and other contents.</span></div>
          <div className="mt-[9px] ml-[7px] h-px w-[396px] shrink-0 bg-[#999]"></div>
          <div className="mt-[3px] ml-[17px] flex h-[25px] items-center gap-[3px] text-[#111]">
            <Svg w={23} h={24}>
              <path d="M11.500 1C18 1 22 5 22 10s-3 8-7 9l-1 4-4-4C4 18 1 15 1 10s4-9 10.500-9z" fill="#dbe6f4" stroke="#7c94b8" />
              <path d="M22 10c0 5-3 8-7 9l-1 4-4-4c6 0 10-3 12-9z" fill="#3c5c98" />
              <circle cx="11.500" cy="5" r="1.800" fill="#1c3c8c" />
              <path d="M9 8h4v7h2v1.500H8.500V15H10V9.500H9z" fill="#1c3c8c" />
            </Svg>
            <span className="pb-[3px]">The permission settings are preserved in Adobe Acrobat</span>
          </div>
        </div>
        <div className="mt-[7px] flex justify-end gap-[8px]">
          <Button w="w-[71px]" primary>OK</Button>
          <Button w="w-[71px]">Cancel</Button>
          <Button w="w-[71px]">Help</Button>
        </div>
      </div>
    </div>
  );
}

export default function App() {
  return (
    <div className="relative h-[720px] w-[1280px] overflow-hidden bg-black font-['Noto_Sans','Open_Sans',sans-serif] leading-none whitespace-nowrap">
      <MainWindow />
      <PublishDialog />
      <SettingsDialog />
      <div className="absolute top-0 left-[779px] flex h-[29px] w-[360px] items-end bg-black pb-[2px] pl-[9px] font-['Liberation_Mono',monospace] text-[12.900px] text-[#2fd43c]">
        Belajar Cepat CorelDraw ~ Dedi Mulyadi R. ST
      </div>
    </div>
  );
}
